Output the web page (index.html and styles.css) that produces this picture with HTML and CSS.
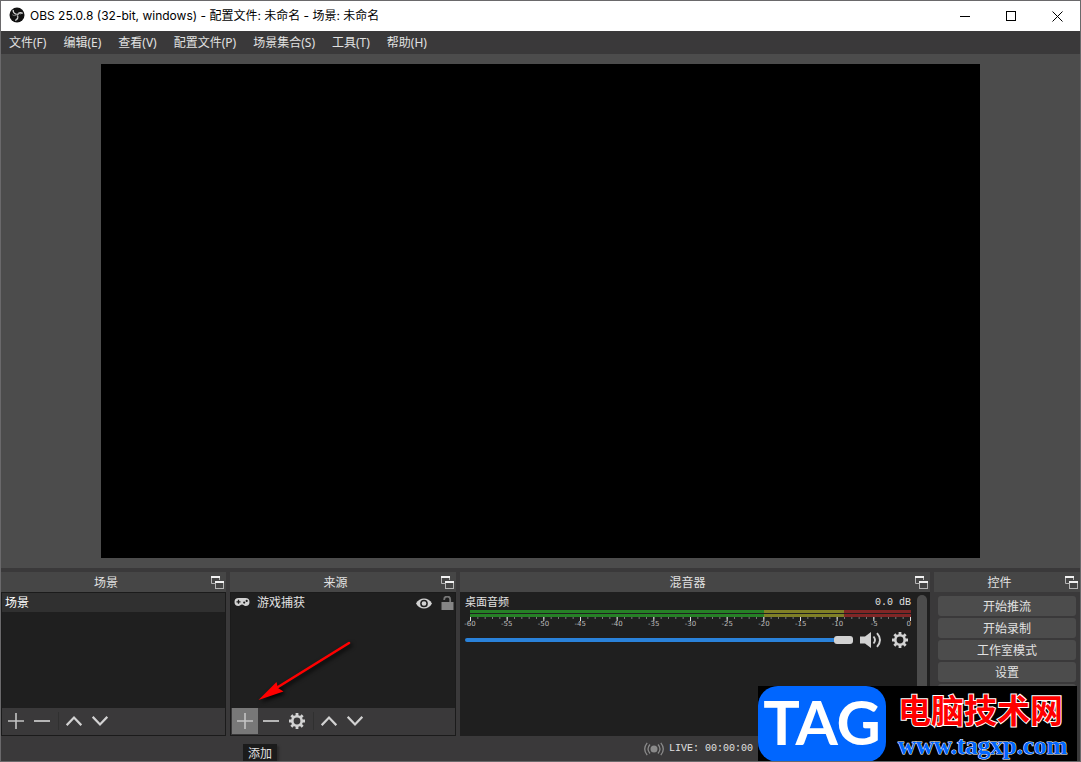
FILE: index.html
```html
<!DOCTYPE html>
<html lang="zh-CN">
<head>
<meta charset="utf-8">
<title>OBS 25.0.8</title>
<link rel="stylesheet" href="styles.css">
</head>
<body>
<svg class="defs" width="0" height="0" aria-hidden="true">
  <symbol id="i-float" viewBox="0 0 14 14">
    <path d="M0.500 1v6.500h4M8.500 4V2" fill="none" stroke="#b5b5b5"/>
    <path d="M0 1h9" stroke="#f2f2f2" stroke-width="2"/>
    <rect x="4.500" y="6" width="8" height="6.500" fill="#464646" stroke="#b5b5b5"/>
    <path d="M4 6h9" stroke="#f2f2f2" stroke-width="2"/>
  </symbol>
  <symbol id="i-plus" viewBox="0 0 16 16"><path d="M8 0v16M0 8h16" stroke="#c4c4c4" stroke-width="1.600"/></symbol>
  <symbol id="i-minus" viewBox="0 0 16 16"><path d="M0 8h16" stroke="#c4c4c4" stroke-width="1.800"/></symbol>
  <symbol id="i-up" viewBox="0 0 16 16"><path d="M0.700 12.200L8 4.500l7.300 7.700" fill="none" stroke="#d2d2d2" stroke-width="2.200"/></symbol>
  <symbol id="i-down" viewBox="0 0 16 16"><path d="M0.700 3.800L8 11.500l7.300-7.700" fill="none" stroke="#d2d2d2" stroke-width="2.200"/></symbol>
  <symbol id="i-gear" viewBox="0 0 16 16">
    <circle cx="8" cy="8" r="4.700" fill="none" stroke="#d2d2d2" stroke-width="2.600"/>
    <path d="M8 0v3M8 13v3M0 8h3M13 8h3M2.350 2.350l2.100 2.100M11.550 11.550l2.100 2.100M2.350 13.650l2.100-2.100M11.550 4.450l2.100-2.100" stroke="#d2d2d2" stroke-width="2.800"/>
  </symbol>
</svg>

<div class="window">
  <header class="titlebar">
    <svg class="logo" viewBox="0 0 16 16" aria-hidden="true">
      <circle cx="8" cy="8" r="7.500" fill="#111"/>
      <path d="M4.200 2.900c-.2 2.100 1.100 3.900 3.500 4.400M13.700 6.300c-2-1-4.200-.4-5.300 1.500M6.200 13.400c2-.8 3-2.900 2.200-5" fill="none" stroke="#d8d8d8" stroke-width="1.300"/>
      <path d="M8.300 7.200c1.100-.9 2.500-.8 3.700 0M8.600 8.300c.5 1.600-.2 2.700-1.200 3.400M7.700 8c-1.600 1-3.300.6-4.400-.3" fill="none" stroke="#999" stroke-width=".8"/>
    </svg>
    <h1 class="title">OBS 25.0.8 (32-bit, windows) - 配置文件: 未命名 - 场景: 未命名</h1>
    <div class="winbtns">
      <button type="button" aria-label="最小化"><svg viewBox="0 0 11 11"><path d="M0 5.500h10"/></svg></button>
      <button type="button" aria-label="最大化"><svg viewBox="0 0 11 11"><rect x="0.500" y="0.500" width="9" height="9"/></svg></button>
      <button type="button" aria-label="关闭"><svg viewBox="0 0 11 11"><path d="M0.500 0.500l10 10M10.500 0.500l-10 10"/></svg></button>
    </div>
  </header>

  <nav class="menubar">
    <button type="button">文件(F)</button>
    <button type="button">编辑(E)</button>
    <button type="button">查看(V)</button>
    <button type="button">配置文件(P)</button>
    <button type="button">场景集合(S)</button>
    <button type="button">工具(T)</button>
    <button type="button">帮助(H)</button>
  </nav>

  <main class="preview"><div class="canvas"></div></main>

  <div class="docks">
    <section class="dock">
      <div class="dock-head"><h2>场景</h2><button type="button" aria-label="浮动"><svg><use href="#i-float"/></svg></button></div>
      <div class="panel">
        <ul class="list"><li class="scene">场景</li></ul>
        <div class="tools">
          <button type="button" aria-label="添加场景"><svg><use href="#i-plus"/></svg></button>
          <button type="button" aria-label="移除场景"><svg><use href="#i-minus"/></svg></button>
          <span class="sep"></span>
          <button type="button" aria-label="上移"><svg><use href="#i-up"/></svg></button>
          <button type="button" aria-label="下移"><svg><use href="#i-down"/></svg></button>
        </div>
      </div>
    </section>

    <section class="dock">
      <div class="dock-head"><h2>来源</h2><button type="button" aria-label="浮动"><svg><use href="#i-float"/></svg></button></div>
      <div class="panel">
        <ul class="list">
          <li class="source">
            <svg class="pad" viewBox="0 0 16 10" aria-hidden="true"><path d="M4.500 1h7a4 4 0 0 1 0 8c-1.500 0-2-1.500-3.500-1.500S6 9 4.500 9a4 4 0 0 1 0-8z" fill="#d2d2d2"/><path d="M4.500 2.800v4M2.500 4.800h4" stroke="#1f1f1f" stroke-width="1.300"/><circle cx="10.200" cy="5.600" r="1.100" fill="#1f1f1f"/><circle cx="12.700" cy="3.900" r="1.100" fill="#1f1f1f"/></svg>
            <span>游戏捕获</span>
            <button type="button" class="eye" aria-label="可见"><svg viewBox="0 0 16 11"><path d="M0 5.500C3.500-1.300 12.500-1.300 16 5.500 12.500 12.300 3.500 12.300 0 5.500z" fill="#d2d2d2"/><circle cx="8" cy="5.500" r="3.100" fill="#d2d2d2" stroke="#1f1f1f" stroke-width="1.500"/></svg></button>
            <button type="button" class="lock" aria-label="锁定"><svg viewBox="0 0 13 14"><path d="M3.200 4V3.500a3 3 0 0 1 6 0V7" fill="none" stroke="#767676" stroke-width="1.800"/><rect x="0.500" y="6" width="12" height="8" fill="#858585"/></svg></button>
          </li>
        </ul>
        <div class="tools">
          <button type="button" class="hot" aria-label="添加来源"><svg><use href="#i-plus"/></svg></button>
          <button type="button" aria-label="移除来源"><svg><use href="#i-minus"/></svg></button>
          <button type="button" aria-label="来源设置"><svg><use href="#i-gear"/></svg></button>
          <span class="sep"></span>
          <button type="button" aria-label="上移"><svg><use href="#i-up"/></svg></button>
          <button type="button" aria-label="下移"><svg><use href="#i-down"/></svg></button>
        </div>
      </div>
      <svg class="arrow" viewBox="0 0 96 64" aria-hidden="true"><path d="M91 5L20 49" stroke="#f00" stroke-width="2.600" stroke-linecap="round"/><path d="M0.500 62L18.500 44l1.500 6 5.500 3.500z" fill="#f00"/></svg>
      <div class="tip" role="tooltip">添加</div>
    </section>

    <section class="dock">
      <div class="dock-head"><h2>混音器</h2><button type="button" aria-label="浮动"><svg><use href="#i-float"/></svg></button></div>
      <div class="mixer">
        <div class="channel">
          <div class="names"><label for="vol">桌面音频</label><span class="db">0.0 dB</span></div>
          <div class="meter">
            <div class="bar"></div>
            <div class="bar"></div>
            <svg class="ticks" viewBox="0 0 441 4" preserveAspectRatio="none" aria-hidden="true">
              <path d="M0 1h441" stroke="#777" stroke-width="2" stroke-dasharray="1 6.333"/>
              <path d="M0 2h441" stroke="#ddd" stroke-width="4" stroke-dasharray="1 35.667"/>
            </svg>
            <div class="scale"><span>-60</span><span>-55</span><span>-50</span><span>-45</span><span>-40</span><span>-35</span><span>-30</span><span>-25</span><span>-20</span><span>-15</span><span>-10</span><span>-5</span><span>0</span></div>
          </div>
          <div class="controls">
            <input id="vol" type="range" min="0" max="100" value="100">
            <button type="button" class="mute" aria-label="静音"><svg viewBox="0 0 24 18"><path d="M1 5.500h5L12 1v16l-6-4.500H1z" fill="#d2d2d2"/><path d="M14.500 5.500q3 3.500 0 7M18 2.200q6 6.800 0 13.600" fill="none" stroke="#d2d2d2" stroke-width="1.900"/></svg></button>
            <button type="button" class="cog" aria-label="音频设置"><svg><use href="#i-gear"/></svg></button>
          </div>
        </div>
        <div class="scroll"></div>
      </div>
    </section>

    <section class="dock">
      <div class="dock-head"><h2>控件</h2><button type="button" aria-label="浮动"><svg><use href="#i-float"/></svg></button></div>
      <div class="actions">
        <button type="button">开始推流</button>
        <button type="button">开始录制</button>
        <button type="button">工作室模式</button>
        <button type="button">设置</button>
        <button type="button" aria-label="退出"></button>
      </div>
    </section>
  </div>

  <footer class="status">
    <svg viewBox="0 0 20 14" aria-hidden="true"><circle cx="10" cy="7" r="3.500" fill="#8a8a8a"/><path d="M6 2.500q-4 4.500 0 9M14 2.500q4 4.500 0 9M3.200 .8q-5 6.200 0 12.400M16.800 .8q5 6.200 0 12.400" fill="none" stroke="#8a8a8a" stroke-width="1.300"/></svg>
    <span>LIVE: 00:00:00</span>
  </footer>

  <aside class="mark">
    <div class="mark-logo">TAG</div>
    <div class="mark-text"><strong>电脑技术网</strong><span>www.tagxp.com</span></div>
  </aside>
</div>
</body>
</html>
```

FILE: styles.css
```css
* { box-sizing: border-box; }

body {
  margin: 0;
  font: 12px/18px "Noto Sans", "Noto Sans CJK SC", sans-serif;
  color: #e1e1e1;
  background: #3a393a;
}

button {
  margin: 0;
  padding: 0;
  border: 0;
  background: none;
  color: inherit;
  font: inherit;
}

svg { display: block; }
.defs { position: absolute; }

.window {
  position: relative;
  display: flex;
  flex-direction: column;
  height: 100vh;
  overflow: hidden;
  border: 1px solid #6a696b;
}

.titlebar {
  flex: none;
  display: flex;
  align-items: center;
  height: 30px;
  padding-left: 8px;
  background: #fff;
  color: #000;
}
.logo { width: 16px; height: 16px; margin: 0 5px 2px 0; }
.title { margin: 0; font: 400 12px/18px Inter, "Noto Sans CJK SC", sans-serif; white-space: nowrap; }
.winbtns { display: flex; margin-left: auto; }
.winbtns button { display: grid; place-items: center; width: 46px; height: 28px; }
.winbtns svg { width: 11px; height: 11px; fill: none; stroke: #000; }

.menubar {
  flex: none;
  display: flex;
  gap: 17px;
  height: 23px;
  padding: 1px 8px 0;
  background: #3a393a;
}
.menubar button { white-space: nowrap; }

.preview {
  flex: 1;
  min-height: 0;
  display: flex;
  justify-content: center;
  padding: 10px;
  background: #4c4c4c;
}
.canvas { height: 100%; aspect-ratio: 16 / 9; background: #000; }

.docks {
  flex: none;
  display: grid;
  grid-template-columns: 225fr 226fr 470fr 146fr;
  gap: 4px;
  height: 168px;
  padding-top: 4px;
}
.dock { position: relative; display: flex; flex-direction: column; min-width: 0; }
.dock-head {
  flex: none;
  display: flex;
  align-items: center;
  height: 20px;
  padding: 2px 1px 0 0;
  background: #464646;
}
.dock-head h2 { flex: 1; margin: 0; font-size: 12px; font-weight: 400; text-align: center; }
.dock-head svg { width: 14px; height: 14px; }

.panel {
  flex: 1;
  display: flex;
  flex-direction: column;
  border: 1px solid #1b1b1b;
  background: #1f1f1f;
}
.list { flex: 1; margin: 0; padding: 0; list-style: none; }
.scene { height: 19px; padding: 1px 0 0 3px; background: #303030; color: #fff; }
.source { display: flex; height: 20px; padding: 0 1px 0 3px; }
.source span { flex: 1; padding-top: 1px; }
.pad { width: 16px; height: 10px; margin: 4px 7px 0 0; }
.eye { margin-right: 9px; }
.eye svg { width: 16px; height: 11px; }
.lock svg { width: 13px; height: 14px; }

.tools { display: flex; height: 27px; padding-left: 1px; background: #3a393a; }
.tools button { display: grid; place-items: center; width: 26px; height: 26px; }
.tools svg { width: 16px; height: 16px; }
.tools .hot { background: #787878; }
.tools .sep { width: 1px; height: 18px; margin: 4px 2px 0 3px; background: #303030; }

.arrow {
  position: absolute;
  left: 28px;
  top: 66px;
  width: 96px;
  height: 64px;
  filter: drop-shadow(2px 2px 2px #000);
}
.tip {
  position: absolute;
  left: 13px;
  top: 172px;
  padding: 1px 5px 0;
  background: #1b1b1b;
  box-shadow: 2px 2px 2px #2a2a2a;
}

.mixer {
  flex: 1;
  display: flex;
  gap: 6px;
  padding: 3px 3px 3px 5px;
  background: #1f1f1f;
}
.channel { flex: 1; min-width: 0; }
.names { display: flex; justify-content: space-between; height: 15px; font-size: 11px; line-height: 14px; }
.db, .status span { font: 10px/16px "Liberation Mono", monospace; white-space: pre; }
.meter { padding-left: 5px; }
.bar {
  height: 3px;
  margin-bottom: 1px;
  background: linear-gradient(90deg, #267f26 66.6%, #7f7f26 66.6% 84.8%, #7f2626 84.8%);
}
.bar + .bar { margin-bottom: 0; }
.ticks { width: 100%; height: 4px; }
.scale { display: flex; justify-content: space-between; height: 9px; font: 7px/6px "DejaVu Sans", sans-serif; color: #bbb; }
.scale span { display: flex; justify-content: center; width: 0; }
.scale span:last-child { justify-content: flex-end; }

.controls { display: flex; align-items: center; height: 20px; }
.controls input { flex: 1; min-width: 0; height: 10px; margin: 0 6px 0 0; appearance: none; background: none; }
.controls input::-webkit-slider-runnable-track { height: 4px; border-radius: 2px; background: #2a82da; }
.controls input::-webkit-slider-thumb {
  appearance: none;
  width: 19px;
  height: 8px;
  margin-top: -2px;
  border-radius: 3px;
  background: #d2d2d2;
}
.mute { margin-right: 9px; }
.mute svg { width: 24px; height: 18px; }
.cog { margin-right: 3px; }
.cog svg { width: 16px; height: 16px; }
.scroll { width: 10px; border-radius: 5px; background: #4c4c4c; }

.actions { display: flex; flex-direction: column; gap: 2px; padding: 4px; }
.actions button { height: 20px; padding-top: 2px; border-radius: 3px; background: #4c4c4c; }

.status {
  flex: none;
  display: flex;
  align-items: center;
  gap: 5px;
  height: 25px;
  padding-left: 643px;
}
.status svg { width: 20px; height: 14px; }

.mark {
  position: absolute;
  right: 3px;
  bottom: -1px;
  display: flex;
  gap: 12px;
  width: 319px;
  height: 76px;
  background: #000;
}
.mark-logo {
  width: 128px;
  border-radius: 20px;
  background: #06f;
  color: #fff;
  font: 700 61px/72px Lato, sans-serif;
  text-align: center;
}
.mark-text { display: flex; flex-direction: column; white-space: nowrap; }
.mark-text strong {
  color: #f00;
  font: 700 33px/46px "Noto Sans CJK SC", sans-serif;
  -webkit-text-stroke: 2px #fff;
  paint-order: stroke fill;
}
.mark-text span {
  color: #06f;
  font: 700 25px/28px "Liberation Serif", serif;
  -webkit-text-stroke: 1px #fff;
  paint-order: stroke fill;
}
```
